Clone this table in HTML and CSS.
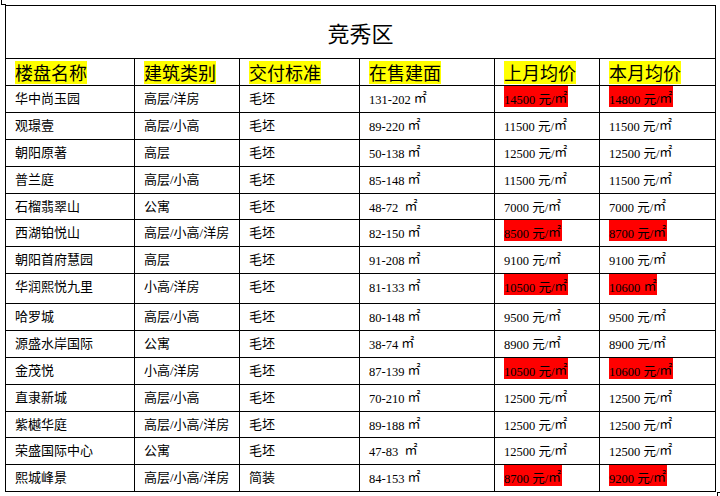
FILE: index.html
```html
<!DOCTYPE html>
<html lang="zh">
<head>
<meta charset="utf-8">
<title>竞秀区</title>
<link rel="stylesheet" href="styles.css">
</head>
<body>
<span class="mark mark-tl"></span>
<div class="sheet">
  <div class="cell title">竞秀区</div>

  <div class="cell head"><span class="hl">楼盘名称</span></div>
  <div class="cell head"><span class="hl">建筑类别</span></div>
  <div class="cell head"><span class="hl">交付标准</span></div>
  <div class="cell head"><span class="hl">在售建面</span></div>
  <div class="cell head"><span class="hl">上月均价</span></div>
  <div class="cell head"><span class="hl">本月均价</span></div>

  <div class="cell"><span class="v zh">华中尚玉园</span></div>
  <div class="cell"><span class="v zh">高层/洋房</span></div>
  <div class="cell"><span class="v zh">毛坯</span></div>
  <div class="cell"><span class="v">131-202 <span class="sq">㎡</span></span></div>
  <div class="cell"><span class="v red">14500 元/<span class="sq">㎡</span></span></div>
  <div class="cell"><span class="v red">14800 元/<span class="sq">㎡</span></span></div>

  <div class="cell"><span class="v zh">观璟壹</span></div>
  <div class="cell"><span class="v zh">高层/小高</span></div>
  <div class="cell"><span class="v zh">毛坯</span></div>
  <div class="cell"><span class="v">89-220 <span class="sq">㎡</span></span></div>
  <div class="cell"><span class="v">11500 元/<span class="sq">㎡</span></span></div>
  <div class="cell"><span class="v">11500 元/<span class="sq">㎡</span></span></div>

  <div class="cell"><span class="v zh">朝阳原著</span></div>
  <div class="cell"><span class="v zh">高层</span></div>
  <div class="cell"><span class="v zh">毛坯</span></div>
  <div class="cell"><span class="v">50-138 <span class="sq">㎡</span></span></div>
  <div class="cell"><span class="v">12500 元/<span class="sq">㎡</span></span></div>
  <div class="cell"><span class="v">12500 元/<span class="sq">㎡</span></span></div>

  <div class="cell"><span class="v zh">普兰庭</span></div>
  <div class="cell"><span class="v zh">高层/小高</span></div>
  <div class="cell"><span class="v zh">毛坯</span></div>
  <div class="cell"><span class="v">85-148 <span class="sq">㎡</span></span></div>
  <div class="cell"><span class="v">11500 元/<span class="sq">㎡</span></span></div>
  <div class="cell"><span class="v">11500 元/<span class="sq">㎡</span></span></div>

  <div class="cell"><span class="v zh">石榴翡翠山</span></div>
  <div class="cell"><span class="v zh">公寓</span></div>
  <div class="cell"><span class="v zh">毛坯</span></div>
  <div class="cell"><span class="v">48-72  <span class="sq">㎡</span></span></div>
  <div class="cell"><span class="v">7000 元/<span class="sq">㎡</span></span></div>
  <div class="cell"><span class="v">7000 元/<span class="sq">㎡</span></span></div>

  <div class="cell"><span class="v zh">西湖铂悦山</span></div>
  <div class="cell"><span class="v zh">高层/小高/洋房</span></div>
  <div class="cell"><span class="v zh">毛坯</span></div>
  <div class="cell"><span class="v">82-150 <span class="sq">㎡</span></span></div>
  <div class="cell"><span class="v red">8500 元/<span class="sq">㎡</span></span></div>
  <div class="cell"><span class="v red">8700 元/<span class="sq">㎡</span></span></div>

  <div class="cell"><span class="v zh">朝阳首府慧园</span></div>
  <div class="cell"><span class="v zh">高层</span></div>
  <div class="cell"><span class="v zh">毛坯</span></div>
  <div class="cell"><span class="v">91-208 <span class="sq">㎡</span></span></div>
  <div class="cell"><span class="v">9100 元/<span class="sq">㎡</span></span></div>
  <div class="cell"><span class="v">9100 元/<span class="sq">㎡</span></span></div>

  <div class="cell"><span class="v zh">华润熙悦九里</span></div>
  <div class="cell"><span class="v zh">小高/洋房</span></div>
  <div class="cell"><span class="v zh">毛坯</span></div>
  <div class="cell"><span class="v">81-133 <span class="sq">㎡</span></span></div>
  <div class="cell"><span class="v red">10500 元/<span class="sq">㎡</span></span></div>
  <div class="cell"><span class="v red">10600 <span class="sq">㎡</span></span></div>

  <div class="cell"><span class="v zh">哈罗城</span></div>
  <div class="cell"><span class="v zh">高层/小高</span></div>
  <div class="cell"><span class="v zh">毛坯</span></div>
  <div class="cell"><span class="v">80-148 <span class="sq">㎡</span></span></div>
  <div class="cell"><span class="v">9500 元/<span class="sq">㎡</span></span></div>
  <div class="cell"><span class="v">9500 元/<span class="sq">㎡</span></span></div>

  <div class="cell"><span class="v zh">源盛水岸国际</span></div>
  <div class="cell"><span class="v zh">公寓</span></div>
  <div class="cell"><span class="v zh">毛坯</span></div>
  <div class="cell"><span class="v">38-74 <span class="sq">㎡</span></span></div>
  <div class="cell"><span class="v">8900 元/<span class="sq">㎡</span></span></div>
  <div class="cell"><span class="v">8900 元/<span class="sq">㎡</span></span></div>

  <div class="cell"><span class="v zh">金茂悦</span></div>
  <div class="cell"><span class="v zh">小高/洋房</span></div>
  <div class="cell"><span class="v zh">毛坯</span></div>
  <div class="cell"><span class="v">87-139 <span class="sq">㎡</span></span></div>
  <div class="cell"><span class="v red">10500 元/<span class="sq">㎡</span></span></div>
  <div class="cell"><span class="v red">10600 元/<span class="sq">㎡</span></span></div>

  <div class="cell"><span class="v zh">直隶新城</span></div>
  <div class="cell"><span class="v zh">高层/小高</span></div>
  <div class="cell"><span class="v zh">毛坯</span></div>
  <div class="cell"><span class="v">70-210 <span class="sq">㎡</span></span></div>
  <div class="cell"><span class="v">12500 元/<span class="sq">㎡</span></span></div>
  <div class="cell"><span class="v">12500 元/<span class="sq">㎡</span></span></div>

  <div class="cell"><span class="v zh">紫樾华庭</span></div>
  <div class="cell"><span class="v zh">高层/小高/洋房</span></div>
  <div class="cell"><span class="v zh">毛坯</span></div>
  <div class="cell"><span class="v">89-188 <span class="sq">㎡</span></span></div>
  <div class="cell"><span class="v">12500 元/<span class="sq">㎡</span></span></div>
  <div class="cell"><span class="v">12500 元/<span class="sq">㎡</span></span></div>

  <div class="cell"><span class="v zh">荣盛国际中心</span></div>
  <div class="cell"><span class="v zh">公寓</span></div>
  <div class="cell"><span class="v zh">毛坯</span></div>
  <div class="cell"><span class="v">47-83  <span class="sq">㎡</span></span></div>
  <div class="cell"><span class="v">12500 元/<span class="sq">㎡</span></span></div>
  <div class="cell"><span class="v">12500 元/<span class="sq">㎡</span></span></div>

  <div class="cell"><span class="v zh">熙城峰景</span></div>
  <div class="cell"><span class="v zh">高层/小高/洋房</span></div>
  <div class="cell"><span class="v zh">简装</span></div>
  <div class="cell"><span class="v">84-153 <span class="sq">㎡</span></span></div>
  <div class="cell"><span class="v red">8700 元/<span class="sq">㎡</span></span></div>
  <div class="cell"><span class="v red">9200 元/<span class="sq">㎡</span></span></div>
</div>
<span class="mark mark-br"></span>
</body>
</html>
```
FILE: styles.css
```css
html, body {
  margin: 0;
  padding: 0;
  background: #fff;
}

body {
  width: 720px;
  height: 496px;
  overflow: hidden;
  position: relative;
  color: #000;
}

.sheet {
  display: grid;
  grid-template-columns: 128px 104px 119px 134px 104px 115px;
  grid-template-rows: 52px 26px 26px 26px 26px 26px 25px 26px 26px 29px 26px 26px 26px 26px 25px 26px 26px;
  gap: 1px;
  padding: 1px;
  background: #000;
  width: max-content;
  margin: 5px 0 0 5px;
}

.cell {
  background: #fff;
  display: flex;
  align-items: flex-start;
  padding-left: 9px;
  font-family: "Liberation Serif", "Noto Sans CJK SC", serif;
  font-size: 12.5px;
  white-space: pre;
  overflow: hidden;
}

.title {
  grid-column: 1 / -1;
  justify-content: center;
  align-items: center;
  padding-left: 0;
  font-family: "Noto Sans CJK SC", sans-serif;
  font-size: 22px;
}

.head {
  align-items: center;
  font-family: "Noto Sans CJK SC", sans-serif;
  font-size: 18px;
}

.hl {
  display: block;
  height: 23px;
  line-height: 23px;
  background: #ffff00;
}

.v {
  display: block;
  height: 21px;
  line-height: 21px;
}

.zh {
  padding-top: 2px;
  height: 19px;
  font-size: 13px;
}

.red {
  background: #ff0000;
  padding-right: 1px;
}

.sq {
  font-family: "Noto Sans CJK SC", sans-serif;
  font-size: 13px;
  vertical-align: 2px;
}

.mark {
  position: absolute;
  display: block;
}

.mark-tl {
  left: 1px;
  top: 0;
  width: 4px;
  height: 4px;
  border-left: 1px solid #000;
  border-bottom: 1px solid #000;
}

.mark-br {
  left: 717px;
  top: 492px;
  width: 3px;
  height: 4px;
  border-left: 1px solid #000;
  border-top: 1px solid #000;
}
```
